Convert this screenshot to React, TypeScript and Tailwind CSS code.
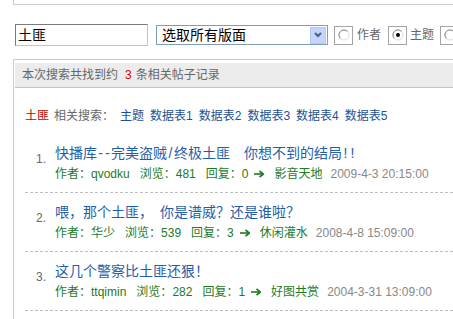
import React from "react";

type Item = {
  n: number;
  title: string;
  author: string;
  views: string;
  replies: string;
  forum: string;
  date: string;
};

const items: Item[] = [
  {
    n: 1,
    title: "快播库--完美盗贼/终极土匪  你想不到的结局!!",
    author: "qvodku",
    views: "481",
    replies: "0",
    forum: "影音天地",
    date: "2009-4-3 20:15:00",
  },
  {
    n: 2,
    title: "喂，那个土匪， 你是谱威？还是谁啦？",
    author: "华少",
    views: "539",
    replies: "3",
    forum: "休闲灌水",
    date: "2008-4-8 15:09:00",
  },
  {
    n: 3,
    title: "这几个警察比土匪还狠！",
    author: "ttqimin",
    views: "282",
    replies: "1",
    forum: "好图共赏",
    date: "2004-3-31 13:09:00",
  },
];

const related = ["主题", "数据表1", "数据表2", "数据表3", "数据表4", "数据表5"];

// half-width ascii cells like the old song font
function Title({ s }: { s: string }) {
  return (
    <>
      {Array.from(s).map((c, i) =>
        c.charCodeAt(0) < 128 ? (
          <span key={i} className="inline-block w-[7px] text-center">
            {c === " " ? "\u00a0" : c}
          </span>
        ) : (
          <React.Fragment key={i}>{c}</React.Fragment>
        )
      )}
    </>
  );
}

function Radio({ on }: { on?: boolean }) {
  return (
    <span className="flex h-[19px] w-[19px] shrink-0 items-center justify-center border border-[#a4a4a4] bg-white">
      <svg width="12" height="12" viewBox="0 0 12 12">
        <circle cx="6" cy="6" r="5" fill="#fff" stroke="#dcdcdc" />
        <path d="M2.4 9.6 A5 5 0 0 1 9.6 2.4" fill="none" stroke="#8a8a8a" />
        {on && <circle cx="6" cy="6" r="2" fill="#000" />}
      </svg>
    </span>
  );
}

function Arrow() {
  return (
    <svg width="10" height="8" viewBox="0 0 10 8" className="shrink-0">
      <path d="M0 4 H8" stroke="#1e7a1e" strokeWidth="1.6" />
      <path d="M5.5 1 L9.5 4 L5.5 7" fill="none" stroke="#1e7a1e" strokeWidth="1.6" />
    </svg>
  );
}

export default function App() {
  return (
    <div
      lang="zh-CN"
      className="flex h-[319px] w-[453px] flex-col overflow-hidden bg-white font-['Liberation_Sans','Noto_Sans_CJK_SC',sans-serif] text-[12px]"
    >
      <div className="ml-[13px] h-[5px] shrink-0 border-b border-l border-[#c6cfd8]" />

      {/* search bar */}
      <div className="mt-[19px] flex h-[22px] w-max shrink-0 items-center whitespace-nowrap pl-[15px]">
        <div className="flex h-[22px] w-[133px] shrink-0 items-center border border-t-[#7b7b7b] border-l-[#7b7b7b] border-b-[#c4c4c4] border-r-[#c4c4c4] pl-[2px] text-[14px] text-black">
          土匪
        </div>
        <div className="ml-[8px] flex h-[20px] w-[172px] shrink-0 items-center justify-between border border-[#7f9db9] bg-white pl-[5px] pr-px text-[14px] text-black">
          <span>选取所有版面</span>
          <span className="flex h-[17px] w-[16px] items-center justify-center border border-[#b5c8f3] bg-[#c4d4fb]">
            <svg width="8" height="6" viewBox="0 0 8 6">
              <path d="M1 1 L4 4 L7 1" fill="none" stroke="#4a5f87" strokeWidth="2" />
            </svg>
          </span>
        </div>
        <div className="ml-[6px] flex shrink-0 items-center text-[#666]">
          <Radio />
          <span className="ml-[4px] shrink-0">作者</span>
          <span className="ml-[7px] shrink-0">
            <Radio on />
          </span>
          <span className="ml-[3px] shrink-0">主题</span>
          <span className="ml-[6px] shrink-0">
            <Radio />
          </span>
        </div>
      </div>

      {/* results box */}
      <div className="ml-[13px] mt-[13px] flex-1 border-l border-t border-[#c6cfd8] pl-px pt-[3px]">
        <div className="flex h-[25px] items-center border-b border-[#c4c4c4] bg-[#ececec] pl-[7px] text-[#666]">
          本次搜索共找到约
          <span className="ml-[7px] mr-[4px] text-[#e00000]">3</span>
          条相关帖子记录
        </div>

        <div className="mt-[18px] flex h-[20px] items-center pl-[10px]">
          <span className="text-[#c00000]">土匪</span>
          <span className="ml-[5px] text-[#666]">相关搜索：</span>
          {related.map((r) => (
            <span key={r} className="ml-[6px] text-[#1d5193]">
              {r}
            </span>
          ))}
        </div>

        <div className="ml-[10px] mt-[8px]">
          {items.map((it) => (
            <div
              key={it.n}
              className="flex border-b border-dashed border-[#bdbdbd] pb-[8px] pl-[11px] pt-[8px]"
            >
              <span className="mt-[6px] h-[22px] w-[19px] shrink-0 leading-[22px] text-[#666]">
                {it.n}.
              </span>
              <div className="flex flex-col">
                <div className="h-[22px] whitespace-nowrap text-[14px] leading-[22px] text-[#1f5ea8]">
                  <Title s={it.title} />
                </div>
                <div className="flex h-[20px] items-center whitespace-nowrap text-[#1e7a1e]">
                  <span>作者：{it.author}</span>
                  <span className="ml-[10px]">浏览：{it.views}</span>
                  <span className="ml-[10px]">回复：{it.replies}</span>
                  <span className="ml-[6px] mr-[10px]">
                    <Arrow />
                  </span>
                  <span>{it.forum}</span>
                  <span className="ml-[8px] text-[#888]">{it.date}</span>
                </div>
              </div>
            </div>
          ))}
        </div>
      </div>
    </div>
  );
}
